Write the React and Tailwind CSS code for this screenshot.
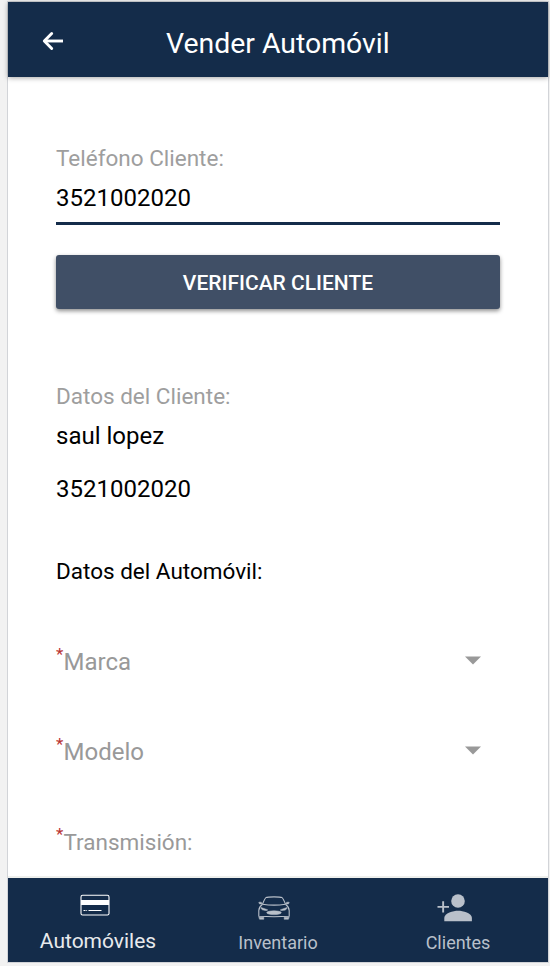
const SELECTS = [
  { label: "Marca" },
  { label: "Modelo" },
];

function BackIcon() {
  return (
    <svg width="24" height="20" viewBox="0 0 24 20" fill="none" stroke="#fff" strokeWidth="2.9" strokeLinecap="round" strokeLinejoin="round">
      <path d="M10.7 2.5 3.3 10l7.4 7.5" />
      <path d="M3.5 10H22" strokeLinecap="butt" />
    </svg>
  );
}

function CardIcon() {
  return (
    <svg width="30" height="22" viewBox="0 0 30 22">
      <rect x="1" y="1.3" width="28" height="19.7" rx="1.6" fill="none" stroke="#fff" strokeWidth="1.1" />
      <path d="M1 6h28v5H1z" fill="#fff" />
      <path d="M3.5 16.5h2M6.300 16.500h.8M8.500 16.500h13" stroke="#fff" strokeWidth="1.2" />
    </svg>
  );
}

function CarIcon() {
  return (
    <svg width="34" height="24" viewBox="0 0 34 24" fill="none" stroke="#b9c0ca" strokeWidth="1.1" strokeLinejoin="round">
      <path d="M5.5 8.2C6.8 5 7.8 2.400 9 1.600c2-1 14-1 16 0 1.200.8 2.200 3.400 3.500 6.600" />
      <path d="M5.500 8.200C12 9.200 22 9.200 28.500 8.200" />
      <path d="M5.500 8.200C3 10 1.900 12 1.800 14.500v5.800c9 .5 21.400.5 30.400 0v-5.800c-.1-2.500-1.200-4.500-3.700-6.300" />
      <path d="M5 8H3.200C2 7.800 1.400 6.800 2 6.200h2.300zM29 8h1.800c1.200-.2 1.800-1.200 1.200-1.800h-2.300zM4 11.500l6.500 2.200c.5.500-.5 1-2 .8-3.500-.2-4.500-1.500-4.500-3zM30 11.500l-6.500 2.200c-.5.500.5 1 2 .8 3.500-.2 4.500-1.500 4.500-3z" fill="#b9c0ca" strokeWidth="0.5" />
      <ellipse cx="17" cy="16.700" rx="7.300" ry="1.900" fill="#b9c0ca" strokeWidth="0.5" />
      <path d="M1.800 21.300h5v2h-4.200zM32.200 21.300h-5v2h4.200z" fill="#b9c0ca" strokeWidth="0.5" />
    </svg>
  );
}

function ClientsIcon() {
  return (
    <svg width="36" height="28" viewBox="0 0 36 28" fill="#b9c0ca">
      <circle cx="21" cy="7" r="6.8" />
      <path d="M7.300 27.300V23.800c0-4.600 9-7 13.800-7s13.800 2.400 13.800 7v3.500z" />
      <path d="M5.200 7.200h1.900v4.700H12v1.900H7.100v4.700H5.200v-4.700H.5v-1.900h4.700z" />
    </svg>
  );
}

function Required() {
  return <span className="-mt-[3px] h-7 w-[7.5px] text-[17px] leading-[18px] text-[#b93434]">*</span>;
}

export default function App() {
  return (
    <div className="h-[966px] w-[550px] overflow-hidden bg-[#f2f2f2] pl-[7px] pt-px font-['Roboto',sans-serif]">
      <div className="flex h-[962px] w-[542px] flex-col border border-[#d2d4d8] bg-white">
        <header className="z-10 flex h-[75px] shrink-0 items-center bg-[#142c4a] pl-[33px] text-white shadow-[0_1px_5px_rgba(0,0,0,0.35)]">
          <button className="w-[125px] pt-0.5" aria-label="Atrás"><BackIcon /></button>
          <h1 className="mt-[9px] text-[28.4px] leading-8">Vender Automóvil</h1>
        </header>

        <main className="flex min-h-0 flex-1 flex-col overflow-hidden px-12 text-2xl text-black">
          <label className="mt-[67px] text-[22.5px] leading-7 text-[#9e9e9e]">Teléfono Cliente:</label>
          <div className="mt-2 flex h-[45px] shrink-0 border-b-[3px] border-[#142c4a] leading-[36px]">3521002020</div>
          <button className="mt-[30px] h-[54px] shrink-0 rounded-[3px] bg-[#404f66] pt-px text-[21px] font-medium text-white shadow-[0_2px_4px_rgba(0,0,0,0.45)]">
            VERIFICAR CLIENTE
          </button>

          <p className="mt-[73px] text-[22.5px] leading-7 text-[#9e9e9e]">Datos del Cliente:</p>
          <p className="mt-3 leading-7">saul lopez</p>
          <p className="mt-[25px] leading-7">3521002020</p>
          <p className="mt-[54px] text-[22.5px] leading-7">Datos del Automóvil:</p>

          <div className="mt-[63px] flex shrink-0 flex-col gap-[62px] text-[#999]">
            {SELECTS.map(field => (
              <div key={field.label} className="flex h-7 items-center justify-between pr-[19px]">
                <div className="flex leading-7">
                  <Required />
                  <span>{field.label}</span>
                </div>
                <svg width="16" height="9" viewBox="0 0 16 9" className="mb-1 fill-[#999]"><path d="M0 .5h16L8 8.500z" /></svg>
              </div>
            ))}
            <div className="flex h-7 text-[22.5px] leading-7">
              <Required />
              <span>Transmisión:</span>
            </div>
          </div>
        </main>

        <nav className="grid h-[86px] shrink-0 grid-cols-3 border-t-2 border-[#eeefec] bg-[#142c4a] text-[18px] leading-6 text-[#b9c0ca]">
          <a className="flex flex-col items-center pt-4 text-[#e8eaed]">
            <span className="mr-[7px]"><CardIcon /></span>
            <span className="mt-[13px] text-[21px]">Automóviles</span>
          </a>
          <a className="flex flex-col items-center pt-[18px]">
            <span className="mr-2"><CarIcon /></span>
            <span className="mt-[11px]">Inventario</span>
          </a>
          <a className="flex flex-col items-center pt-4">
            <span className="mr-[7px]"><ClientsIcon /></span>
            <span className="mt-[9px]">Clientes</span>
          </a>
        </nav>
      </div>
    </div>
  );
}
